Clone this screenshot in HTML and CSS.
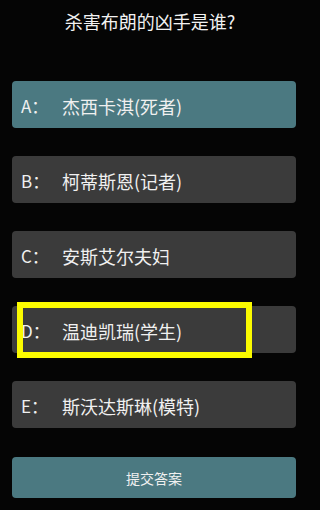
FILE: index.html
```html
<!DOCTYPE html>
<html lang="zh">
<head>
<meta charset="utf-8">
<link rel="stylesheet" href="styles.css">
</head>
<body>
<div class="page">
  <h1 class="title">杀害布朗的凶手是谁?</h1>
  <div class="options">
    <div class="option selected"><span class="label">A：</span><span class="text">杰西卡淇(死者)</span></div>
    <div class="option"><span class="label">B：</span><span class="text">柯蒂斯恩(记者)</span></div>
    <div class="option"><span class="label">C：</span><span class="text">安斯艾尔夫妇</span></div>
    <div class="option marked"><span class="label">D：</span><span class="text">温迪凯瑞(学生)</span><span class="highlight"></span></div>
    <div class="option"><span class="label">E：</span><span class="text">斯沃达斯琳(模特)</span></div>
  </div>
  <div class="submit">提交答案</div>
</div>
</body>
</html>
```
FILE: styles.css
```css
* { box-sizing: border-box; }
html, body { margin: 0; padding: 0; background: #050505; }
body {
  width: 307px;
  height: 510px;
  overflow: hidden;
  font-family: "Noto Sans CJK SC", "Noto Sans", sans-serif;
  color: #f0f0f0;
}
.page {
  display: flex;
  flex-direction: column;
  padding: 0 11px 0 12px;
}
.title {
  margin: 0;
  padding-top: 11px;
  height: 81px;
  font-size: 18px;
  font-weight: normal;
  line-height: 20px;
  text-align: center;
  padding-right: 8px;
  color: #f2f2f2;
}
.options {
  display: flex;
  flex-direction: column;
  gap: 28px;
}
.option {
  position: relative;
  height: 47px;
  border-radius: 4px;
  background: #3b3b3b;
  display: flex;
  align-items: center;
  padding-left: 9px;
  font-size: 18px;
  padding-top: 2px;
}
.option.selected { background: #4b7981; }
.label {
  width: 41px;
  font-size: 17px;
}
.text { letter-spacing: 0; }
.highlight {
  position: absolute;
  left: 5px;
  top: -4px;
  width: 235px;
  height: 56px;
  border: 6px solid #fbfb00;
}
.submit {
  margin-top: 29px;
  height: 41px;
  border-radius: 4px;
  background: #4b7981;
  display: flex;
  align-items: center;
  justify-content: center;
  font-size: 14px;
}
```
